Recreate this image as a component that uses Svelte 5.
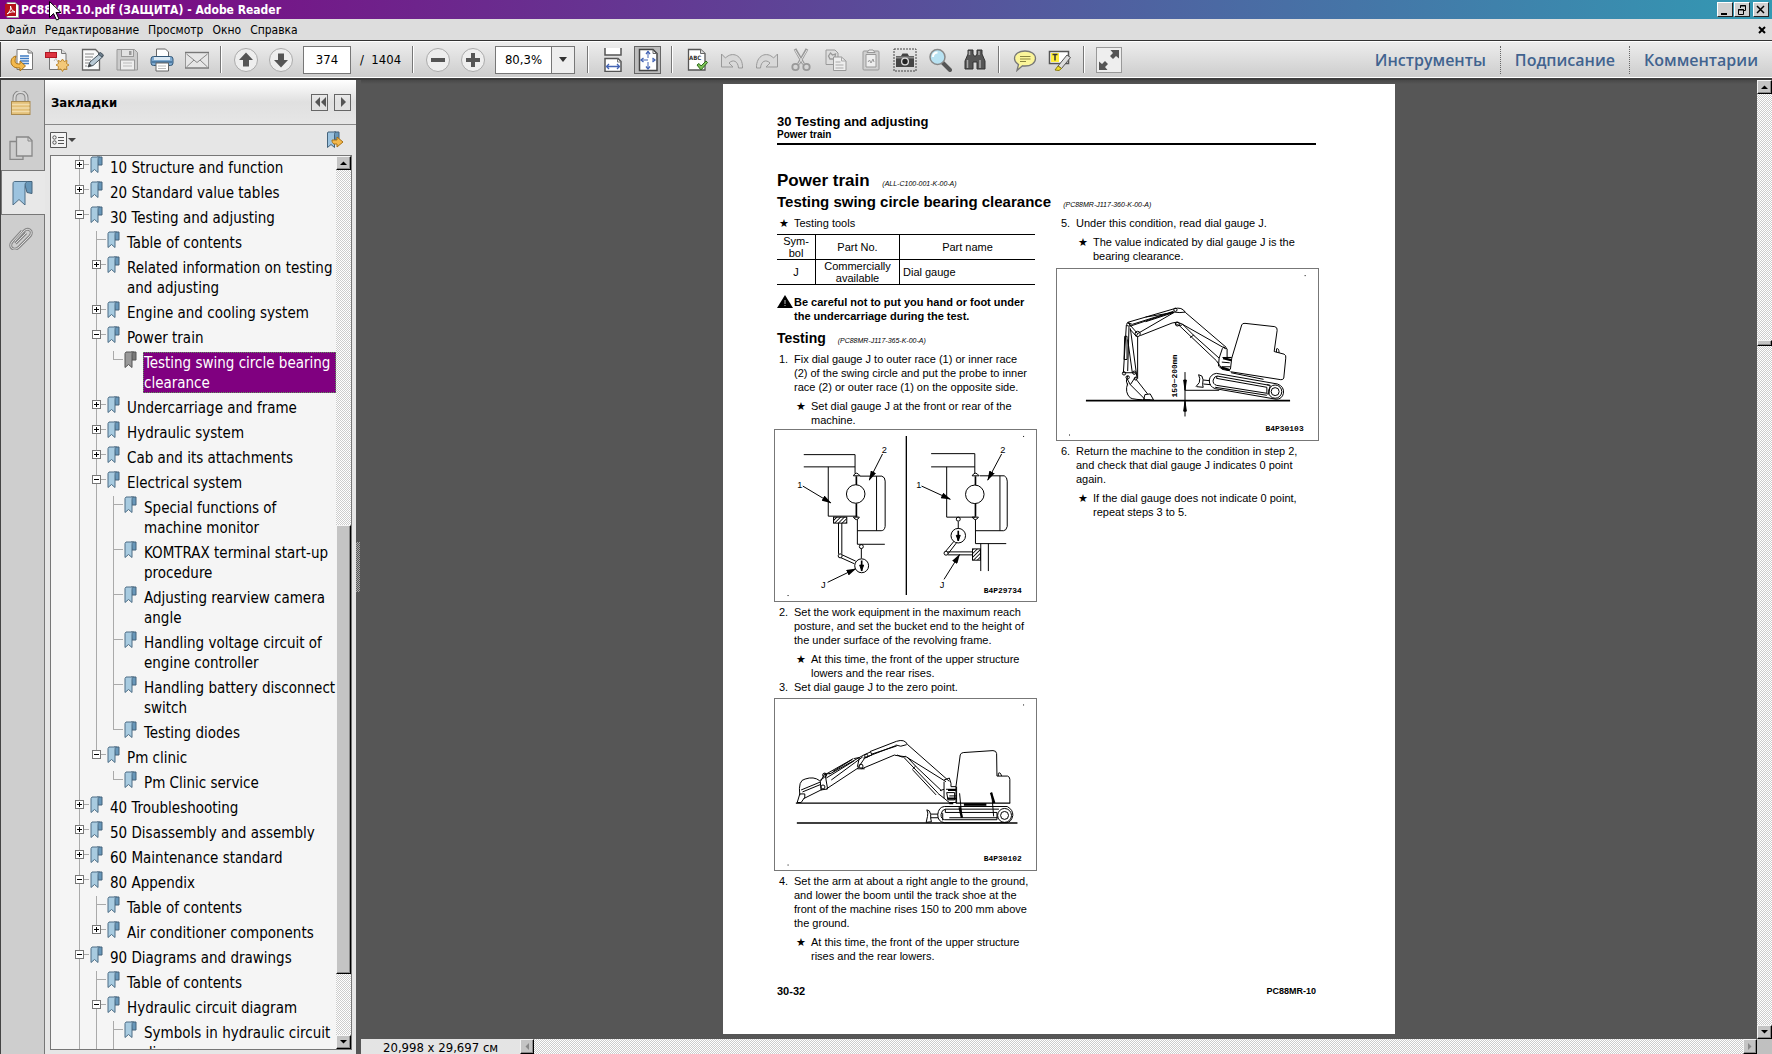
<script>
    const menus = ["Файл", "Редактирование", "Просмотр", "Окно", "Справка"]
    const panes = ["Инструменты", "Подписание", "Комментарии"]

    const fileTools = [
        { icon: "open", label: "Открыть" },
        { icon: "create", label: "Создать PDF" },
        { icon: "sign", label: "Заполнить и подписать" },
        { icon: "save", label: "Сохранить" },
        { icon: "print", label: "Печать" },
        { icon: "mail", label: "Отправить" },
    ]

    const editTools = [
        { icon: "spell", label: "Орфография" },
        { icon: "undo", label: "Отменить" },
        { icon: "redo", label: "Повторить" },
        { icon: "cut", label: "Вырезать" },
        { icon: "copy", label: "Копировать" },
        { icon: "paste", label: "Вставить" },
        { icon: "camera", label: "Снимок" },
        { icon: "zoom", label: "Масштаб" },
        { icon: "find", label: "Найти" },
    ]

    const sideTabs = [
        { icon: "lock", label: "Защита" },
        { icon: "pages", label: "Миниатюры страниц" },
        { icon: "bookmark", label: "Закладки" },
        { icon: "clip", label: "Вложения" },
    ]

    // sign: "+" collapsed, "-" expanded, nothing for a leaf
    const bookmarks = [
        { level: 0, sign: "+", text: "10 Structure and function" },
        { level: 0, sign: "+", text: "20 Standard value tables" },
        { level: 0, sign: "-", text: "30 Testing and adjusting" },
        { level: 1, text: "Table of contents" },
        { level: 1, sign: "+", text: "Related information on testing\nand adjusting" },
        { level: 1, sign: "+", text: "Engine and cooling system" },
        { level: 1, sign: "-", text: "Power train" },
        { level: 2, text: "Testing swing circle bearing\nclearance" },
        { level: 1, sign: "+", text: "Undercarriage and frame" },
        { level: 1, sign: "+", text: "Hydraulic system" },
        { level: 1, sign: "+", text: "Cab and its attachments" },
        { level: 1, sign: "-", text: "Electrical system" },
        { level: 2, text: "Special functions of\nmachine monitor" },
        { level: 2, text: "KOMTRAX terminal start-up\nprocedure" },
        { level: 2, text: "Adjusting rearview camera\nangle" },
        { level: 2, text: "Handling voltage circuit of\nengine controller" },
        { level: 2, text: "Handling battery disconnect\nswitch" },
        { level: 2, text: "Testing diodes" },
        { level: 1, sign: "-", text: "Pm clinic" },
        { level: 2, text: "Pm Clinic service" },
        { level: 0, sign: "+", text: "40 Troubleshooting" },
        { level: 0, sign: "+", text: "50 Disassembly and assembly" },
        { level: 0, sign: "+", text: "60 Maintenance standard" },
        { level: 0, sign: "-", text: "80 Appendix" },
        { level: 1, text: "Table of contents" },
        { level: 1, sign: "+", text: "Air conditioner components" },
        { level: 0, sign: "-", text: "90 Diagrams and drawings" },
        { level: 1, text: "Table of contents" },
        { level: 1, sign: "-", text: "Hydraulic circuit diagram" },
        { level: 2, text: "Symbols in hydraulic circuit\ndiagram" },
    ]

    const pageCount = 1404

    let selected = $state(7)
    let page = $state("374")
    let zoom = $state("80,3%")

    let scrolled = $derived((Number(page) / pageCount) * 99)

    // does the guide line of this level go on below the row?
    function continues(index, level) {
        for (let i = index + 1; i < bookmarks.length; i++) {
            if (bookmarks[i].level < level) return false
            if (bookmarks[i].level === level) return true
        }
        return true
    }

    function levelsUpTo(level) {
        return Array.from({ length: level + 1 }, (_, i) => i)
    }
</script>

{#snippet icon(name)}
    <svg class="icon" viewBox="0 0 24 24" width="24" height="24" aria-hidden="true">
        {#if name === "open"}
            <path d="M7 1.5h11l4.5 3v17H7z" fill="#fff" stroke="#777" />
            <path d="M18 1.5v3.5h4.5" fill="#ddd" stroke="#777" />
            <path d="M10 8h9M10 10.5h9M10 13h9M12 15.5h7" stroke="#3f7cc4" stroke-width="1.4" />
            <path d="M6 8C1 9 0 14 2 17c1.5 2.5 4 3 8 3v3l5.5-5-5.5-5v3c-3 0-5-.5-5-3 0-2 .5-3 1-5z" fill="#f3b94d" stroke="#a97216" />
        {:else if name === "create"}
            <path d="M4.5 1.5h12l4.5 4v16h-16.5z" fill="#f4f4f4" stroke="#777" />
            <path d="M16.5 1.5v4h4.5" fill="#ddd" stroke="#777" />
            <rect x="0.5" y="4.5" width="11" height="5" fill="#dd3340" stroke="#b01824" />
            <path d="M9 13c3-4 1-3 4 1" stroke="#bbb" />
            <path d="M17.5 11l1.5 2.5 3-1-.5 3 2.5 1.5-2.5 1.5.5 3-3-.5-1.5 2.5-1.5-2.5-3 .5.5-3-2.5-1.5 2.5-1.5-.5-3 3 1z" fill="#f3c878" stroke="#c08a30" />
        {:else if name === "sign"}
            <path d="M2.5 1.5h13l4 4v16.5h-17z" fill="#fafafa" stroke="#666" stroke-width="1.3" />
            <path d="M5 6h9M5 9h8M5 12h6M5 15h4M5 18h2" stroke="#888" />
            <path d="M8 19l2-5 10-8.5 3 3-10 9z" fill="#b9cad6" stroke="#45525c" />
            <path d="M18 6l2.5-1.5 3 2.5-1.5 2z" fill="#6d7f8d" stroke="#45525c" />
            <path d="M8 19l4-1.5-2.5-2z" fill="#444" />
        {:else if name === "save"}
            <path d="M2 1.5h17.5l3 3v17.5H2z" fill="#ccc" stroke="#999" />
            <rect x="6.5" y="1.5" width="12" height="7" fill="#e2e2e2" stroke="#999" />
            <rect x="14" y="3" width="2.5" height="4" fill="#999" />
            <rect x="5.5" y="12" width="14" height="10" fill="#eee" stroke="#999" />
            <path d="M8 15h9M8 18h9" stroke="#bbb" />
        {:else if name === "print"}
            <path d="M6.5 10V1h9l3 3v6z" fill="#fff" stroke="#666" />
            <rect x="1" y="8.5" width="22" height="9" rx="2.5" fill="#7faad0" stroke="#345878" />
            <rect x="4" y="9" width="16" height="3" fill="#dbe8f2" />
            <rect x="1.5" y="13" width="21" height="2" fill="#4e7ca5" />
            <path d="M6 15h12.5v8H6z" fill="#fff" stroke="#666" />
            <path d="M8 18h8M8 20.5h8" stroke="#bbb" />
        {:else if name === "mail"}
            <rect x="0" y="4.5" width="24" height="15.5" fill="#e6e6e6" stroke="#777" stroke-width="1.4" />
            <path d="M1.5 6l10.5 8.5L22.5 6M1.5 19l7.5-7M22.5 19l-7.5-7" stroke="#888" />
        {:else if name === "up"}
            <circle cx="12" cy="12" r="11.5" fill="#eee" stroke="#aaa" />
            <path d="M12 4.5l7 7.5h-4v6.5H9V12H5z" fill="#555" />
        {:else if name === "down"}
            <circle cx="12" cy="12" r="11.5" fill="#eee" stroke="#aaa" />
            <path d="M12 19.5L5 12h4V5.5h6V12h4z" fill="#555" />
        {:else if name === "minus"}
            <circle cx="12" cy="12" r="11.5" fill="#eee" stroke="#aaa" />
            <rect x="5" y="10" width="14" height="4" fill="#555" />
        {:else if name === "plus"}
            <circle cx="12" cy="12" r="11.5" fill="#eee" stroke="#aaa" />
            <path d="M10 5h4v5h5v4h-5v5h-4v-5H5v-4h5z" fill="#555" />
        {:else if name === "fitwidth"}
            <path d="M4 0v7h16V0" fill="#fff" stroke="#555" stroke-width="1.5" />
            <path d="M4 23.5V10.5h13l3 3v10z" fill="#fff" stroke="#555" stroke-width="1.5" />
            <path d="M16.5 10.5v3.5H20" stroke="#777" />
            <path d="M5.5 18.5h13M8 16l-2.5 2.5L8 21M16 16l2.5 2.5L16 21" stroke="#4464b4" stroke-width="1.3" />
        {:else if name === "fitpage"}
            <path d="M3.5 1.5h13.5l4 4v17H3.5z" fill="#fff" stroke="#444" stroke-width="1.5" />
            <path d="M17 1.5v4h4" stroke="#666" />
            <path d="M12 3v18M5 12h14" stroke="#4464b4" stroke-dasharray="7 4" />
            <path d="M10 6l2-2.5L14 6M10 18.5l2 2.5 2-2.5M7.5 10L5 12l2.5 2M16.5 10l2.5 2-2.5 2" stroke="#4464b4" stroke-width="1.3" />
        {:else if name === "spell"}
            <path d="M3.5 1.5h12l4.5 4v16.5H3.5z" fill="#fff" stroke="#555" stroke-width="1.3" />
            <path d="M15.5 1.5v4H20" fill="#ddd" stroke="#666" />
            <text x="4" y="12" font-size="6" font-weight="bold" fill="#333">ABC</text>
            <path d="M12 17l2-1.5 2 2.5 5-5 1.5 1.5-6.5 7.5z" fill="#7ec258" stroke="#2e6b1b" />
        {:else if name === "undo"}
            <path d="M1.5 6v13h11.5l-4-4c4-4 9-2 9.5 5h4C23 7 12 3 5.5 10z" fill="#d8d8d8" stroke="#999" />
        {:else if name === "redo"}
            <path d="M22.5 6v13H11l4-4c-4-4-9-2-9.5 5h-4C1 7 12 3 18.5 10z" fill="#d8d8d8" stroke="#999" />
        {:else if name === "cut"}
            <path d="M6 1l8.5 15M18 1L9.5 16" stroke="#999" stroke-width="3" />
            <path d="M6 2l8.5 14M18 2L9.5 16" stroke="#e2e2e2" />
            <circle cx="6.5" cy="19" r="3.2" stroke="#999" stroke-width="1.8" />
            <circle cx="17.5" cy="19" r="3.2" stroke="#999" stroke-width="1.8" />
        {:else if name === "copy"}
            <path d="M2 2h9l3 3v11.5H2z" fill="#ddd" stroke="#999" />
            <path d="M4.5 8l2-3 2 2 3-1-1 5H6z" stroke="#999" stroke-width="1.3" />
            <path d="M9.5 9h8l4.5 4v9.5H9.5z" fill="#eee" stroke="#999" />
            <path d="M11.5 14h5M11.5 17h8M11.5 20h8M17.5 9v4H22" stroke="#aaa" />
        {:else if name === "paste"}
            <rect x="4" y="3" width="16" height="19" rx="1" fill="#d0d0d0" stroke="#999" />
            <path d="M8 4.5l2-2.5h4l2 2.5z" fill="#eee" stroke="#999" />
            <path d="M7 6.5h10v12.5H7z" fill="#eee" stroke="#999" />
            <path d="M9 14l1.5-2 1.5 3 2-4 1 3" stroke="#999" />
        {:else if name === "camera"}
            <rect x="1" y="1" width="22" height="22" stroke="#444" stroke-dasharray="2 1" />
            <path d="M3 8h5l1.5-2.5h5L16 8h5v11H3z" fill="#444" />
            <path d="M3 8.5h18v2H3z" fill="#888" />
            <circle cx="12" cy="13.5" r="4" fill="#ddd" />
            <circle cx="12" cy="13.5" r="2.7" fill="#222" />
        {:else if name === "zoom"}
            <path d="M14 14l8 8" stroke="#555" stroke-width="4" stroke-linecap="round" />
            <circle cx="9.5" cy="9" r="7.5" fill="#b8e2f2" stroke="#888" stroke-width="1.5" />
            <path d="M5 9c0-3 2-4.5 4.5-4.5" stroke="#fff" stroke-width="2" />
        {:else if name === "find"}
            <path d="M5 2h5v4l1 2h2l1-2V2h5v4l3 7v8h-8v-7h-4v7H2v-8l3-7z" fill="#555" stroke="#333" />
            <path d="M4.5 12v8M17 12v8M6.5 3v4M16 3v4" stroke="#aaa" stroke-width="1.5" />
        {:else if name === "comment"}
            <path d="M12 3c6 0 10.5 3 10.5 7.5S18 18 12 18c-1 0-2 0-2.5-.2L4 22.5l1.5-6C3 15 1.5 13 1.5 10.5 1.5 6 6 3 12 3z" fill="#fbf59a" stroke="#777" stroke-width="1.3" />
            <path d="M7 8.5h10.5M7 11h10.5M7 13.5h6" stroke="#8a8540" />
        {:else if name === "highlight"}
            <rect x="1.5" y="3.5" width="19" height="12" fill="#fff" stroke="#555" stroke-width="1.5" />
            <rect x="3" y="5" width="8" height="9" fill="#ffee3c" />
            <path d="M4.5 6.5h5M7 6.5v6" stroke="#333" stroke-width="1.5" />
            <path d="M10 18L19 7l3.5 2.5-9 11z" fill="#ddd" stroke="#555" />
            <path d="M7 22l3-4 3.5 2.5-2.5 2z" fill="#eedc30" stroke="#8a7b10" />
        {:else if name === "expand"}
            <path d="M22 2v8.5l-3-2.5-3 3-3-3 3-3-2.5-3z" fill="#555" />
            <path d="M2 22v-8.5l3 2.5 3-3 3 3-3 3 2.5 3z" fill="#555" />
        {:else if name === "lock"}
            <path d="M5.5 11V7c0-8 12-8 12 0v4" stroke="#888" stroke-width="4" />
            <path d="M5.5 11V7c0-8 12-8 12 0v4" stroke="#d8d8d8" stroke-width="2" />
            <rect x="2.5" y="10.5" width="18.5" height="13" fill="#e3c078" stroke="#a98a50" />
            <path d="M3 13.5h17.5M3 17h17.5M3 20.5h17.5" stroke="#f2dcaa" stroke-width="1.5" />
        {:else if name === "pages"}
            <path d="M1 5.5h13v18H1z" fill="#ccc" stroke="#888" stroke-width="1.3" />
            <path d="M7.5 1h12l3.5 3.5V20H7.5z" fill="#d8d8d8" stroke="#888" stroke-width="1.3" />
            <path d="M19 1v4h4" stroke="#888" />
        {:else if name === "bookmark"}
            <path d="M14 .5h8v12l-5-1z" fill="#6897b9" stroke="#44637b" />
            <path d="M4.5.5h13c-2 1-2.5 2-2.5 4V24l-6-5.5-6 5.5V3c0-1.5.5-2.5 1.5-2.5z" fill="#9cc3df" stroke="#4d6d85" />
        {:else if name === "clip"}
            <path d="M6 15L15 5c4-4 10 0 6 5L10 21c-5 5-11 0-7-5L13 5M6.5 17.5L17 7" stroke="#888" stroke-width="3" />
            <path d="M6 15L15 5c4-4 10 0 6 5L10 21c-5 5-11 0-7-5L13 5M6.5 17.5L17 7" stroke="#ddd" />
        {/if}
    </svg>
{/snippet}

{#snippet flag()}
    <svg class="flag" viewBox="0 0 14 18" width="14" height="18" aria-hidden="true">
        <path class="fold" d="M8 1h5v8H9z" />
        <path class="ribbon" d="M3 1h7.5C9.5 1.5 9 2 9 3.5V16.5l-3.5-3-3.5 3V2.5z" />
    </svg>
{/snippet}

{#snippet arrow(dir)}
    <svg viewBox="0 0 8 8" width="8" height="8" aria-hidden="true">
        {#if dir === "up"}<path d="M0 6h7L3.5 2.5z" />
        {:else if dir === "down"}<path d="M0 2h7L3.5 5.5z" />
        {:else if dir === "left"}<path d="M6 0v7L2.5 3.5z" fill="#888" />
        {:else}<path d="M2 0v7l3.5-3.5z" fill="#888" />{/if}
    </svg>
{/snippet}

<div class="window">
    <header class="titlebar">
        <svg viewBox="0 0 14 16" width="14" height="16" aria-hidden="true">
            <path d="M2 .5h8l3.5 3v12H2z" fill="#fff" stroke="#999" />
            <rect x="0" y="2" width="11" height="12" fill="#b5121b" />
            <path d="M2 12c3-2 4-5 3.5-8 .5 3 2 5 4.5 6-3-.5-5 0-8 2z" fill="none" stroke="#fff" />
        </svg>
        <h1>PC88MR-10.pdf (ЗАЩИТА) - Adobe Reader</h1>
        <div class="windowButtons">
            <button aria-label="Свернуть"><svg viewBox="0 0 12 12" width="12" height="12"><path d="M2 9h6v2H2z" /></svg></button>
            <button aria-label="Восстановить"><svg viewBox="0 0 12 12" width="12" height="12"><path d="M4.5 4V1.5h5v5H8M4 2h6M2.5 5.5h5v5h-5zM2 6h6" fill="none" stroke="#000" /></svg></button>
            <button class="close" aria-label="Закрыть"><svg viewBox="0 0 12 12" width="12" height="12"><path d="M2 2l7 7M9 2L2 9" stroke="#000" stroke-width="1.5" /></svg></button>
        </div>
        <svg class="cursor" viewBox="0 0 12 20" width="12" height="20" aria-hidden="true">
            <path d="M.5.5v16l4-4 3 6.5 2.5-1-3-6.5H12z" fill="#fff" stroke="#000" />
        </svg>
    </header>

    <nav class="menubar">
        {#each menus as menu}
            <button>{menu}</button>
        {/each}
        <button class="closeDoc" aria-label="Закрыть документ"><svg viewBox="0 0 8 8" width="8" height="8"><path d="M1 1l6 6M7 1L1 7" stroke="#000" stroke-width="2" /></svg></button>
    </nav>

    <div class="toolbar">
        <div class="group">
            {#each fileTools as tool}
                <button aria-label={tool.label}>{@render icon(tool.icon)}</button>
            {/each}
        </div>
        <span class="sep near"></span>
        <div class="group">
            <button aria-label="Предыдущая страница">{@render icon("up")}</button>
            <button aria-label="Следующая страница">{@render icon("down")}</button>
        </div>
        <input class="pageNumber" aria-label="Страница" bind:value={page} />
        <span class="total">/ &nbsp;{pageCount}</span>
        <span class="sep near"></span>
        <div class="group">
            <button aria-label="Уменьшить">{@render icon("minus")}</button>
            <button aria-label="Увеличить">{@render icon("plus")}</button>
        </div>
        <div class="combo">
            <input aria-label="Масштаб" bind:value={zoom} />
            <button aria-label="Выбрать масштаб"><svg viewBox="0 0 8 6" width="8" height="6"><path d="M0 0h8L4 5z" fill="#333" /></svg></button>
        </div>
        <span class="sep wide"></span>
        <div class="group">
            <button aria-label="По ширине">{@render icon("fitwidth")}</button>
            <button class="pressed" aria-label="Страница целиком">{@render icon("fitpage")}</button>
        </div>
        <span class="sep"></span>
        <div class="group edit">
            {#each editTools as tool}
                <button aria-label={tool.label}>{@render icon(tool.icon)}</button>
            {/each}
        </div>
        <span class="sep"></span>
        <div class="group">
            <button aria-label="Заметка">{@render icon("comment")}</button>
            <button aria-label="Выделение">{@render icon("highlight")}</button>
        </div>
        <span class="sep"></span>
        <button class="expand" aria-label="Режим чтения">{@render icon("expand")}</button>
        <div class="panes">
            {#each panes as pane}
                <a href="#{pane}">{pane}</a>
            {/each}
        </div>
    </div>

    <div class="body">
        <nav class="tabs">
            {#each sideTabs as tab}
                <button class:active={tab.icon === "bookmark"} aria-label={tab.label}>{@render icon(tab.icon)}</button>
            {/each}
        </nav>

        <aside class="panel">
            <div class="panelHead">
                <h2>Закладки</h2>
                <button aria-label="Свернуть панель"><svg viewBox="0 0 12 10" width="12" height="10"><path d="M6 0v10L1 5zM12 0v10L7 5z" fill="#555" /></svg></button>
                <button aria-label="Развернуть панель"><svg viewBox="0 0 12 10" width="12" height="10"><path d="M4 0v10l5-5z" fill="#555" /></svg></button>
            </div>
            <div class="panelTools">
                <button aria-label="Параметры">
                    <svg viewBox="0 0 26 16" width="26" height="16">
                        <path d="M.5.5h16v15H.5z" fill="#f4f4f4" stroke="#555" />
                        <path d="M8 5.5h6M8 8.5h6M8 11.5h6" stroke="#555" />
                        <circle cx="4.5" cy="5.5" r="1.7" fill="none" stroke="#555" />
                        <circle cx="4.5" cy="10.5" r="1.7" fill="none" stroke="#555" />
                        <path d="M18 6h8l-4 4z" fill="#444" />
                    </svg>
                </button>
                <button aria-label="Найти текущую закладку">
                    <svg viewBox="0 0 18 18" width="18" height="18">
                        <path d="M8 1h5v8H9z" fill="#6897b9" stroke="#44637b" />
                        <path d="M2 1h8C9 1.5 8.5 2 8.5 3.5v13l-3.5-3-3.5 3V2z" fill="#9cc3df" stroke="#44637b" />
                        <path d="M6 9h5V6l6 5-6 5v-3H8c-1.5-1-2-2-2-4z" fill="#f3b94d" stroke="#a97216" />
                    </svg>
                </button>
            </div>
            <div class="treeBox">
                <ul class="tree">
                    {#each bookmarks as item, i}
                        <li>
                            {#each levelsUpTo(item.level) as level}
                                <span class="guide" class:own={level === item.level} class:through={continues(i, level)}>
                                    {#if level === item.level && item.sign}
                                        <button class="toggle" class:plus={item.sign === "+"} aria-label="Развернуть"></button>
                                    {/if}
                                </span>
                            {/each}
                            <a href="#bookmark-{i}" class:selected={selected === i} onclick={() => (selected = i)}>
                                {@render flag()}
                                <span>{item.text}</span>
                            </a>
                        </li>
                    {/each}
                </ul>
                <div class="scroll">
                    <button aria-label="Вверх">{@render arrow("up")}</button>
                    <div class="track"><div class="thumb" style="top: 41%; height: 52%"></div></div>
                    <button aria-label="Вниз">{@render arrow("down")}</button>
                </div>
            </div>
        </aside>

        <div class="splitter"><span></span></div>

        <div class="viewer">
            <div class="viewRow">
                <main>
                    <article class="sheet">
                        <div class="running">
                            <p class="chapter">30 Testing and adjusting</p>
                            <p>Power train</p>
                        </div>
                        <h2>Power train <i>(ALL-C100-001-K-00-A)</i></h2>
                        <h3>Testing swing circle bearing clearance <i>(PC88MR-J117-360-K-00-A)</i></h3>

                        <div class="columns">
                            <section>
                                <p class="item"><b>★</b>Testing tools</p>
                                <table>
                                    <thead>
                                        <tr><th>Sym-<br />bol</th><th>Part No.</th><th>Part name</th></tr>
                                    </thead>
                                    <tbody>
                                        <tr><td>J</td><td>Commercially<br />available</td><td class="left">Dial gauge</td></tr>
                                    </tbody>
                                </table>
                                <p class="warning">
                                    <svg viewBox="0 0 16 14" width="16" height="14" aria-hidden="true">
                                        <path d="M8 0l8 13H0z" />
                                        <path d="M8 5v4M8 10v1" stroke="#bbb" />
                                    </svg>
                                    <span>Be careful not to put you hand or foot under<br />the undercarriage during the test.</span>
                                </p>
                                <h4>Testing <i>(PC88MR-J117-365-K-00-A)</i></h4>
                                <p class="item"><b>1.</b>Fix dial gauge J to outer race (1) or inner race<br />(2) of the swing circle and put the probe to inner<br />race (2) or outer race (1) on the opposite side.</p>
                                <p class="item sub"><b>★</b>Set dial gauge J at the front or rear of the<br />machine.</p>
                                <figure>
                                    <svg viewBox="13 14 789 516" role="img" aria-label="B4P29734">
                                        <defs>
                                            <marker id="head" viewBox="0 0 30 18" refX="28" refY="9" markerWidth="30" markerHeight="18" markerUnits="userSpaceOnUse" orient="auto">
                                                <path d="M0 0L30 9L0 18z" fill="#000" stroke="none" />
                                            </marker>
                                            <pattern id="hatch" width="8" height="8" patternUnits="userSpaceOnUse" patternTransform="rotate(45)">
                                                <path d="M0 0v8" stroke-width="5" />
                                            </pattern>
                                        </defs>
                                        <path d="M100 88H255V145M100 125H255M174 125V274H262M270 153H336Q346 156 346 168V305Q344 318 334 318H262M320 153V318M262 284V359H345" />
                                        <path d="M259 153V180M259 235V276" stroke-width="5" />
                                        <path d="M250 152Q258 136 270 152ZM250 277Q260 292 268 277Z" />
                                        <circle cx="257" cy="207" r="28" fill="#fff" />
                                        <rect x="190" y="277" width="40" height="18" fill="url(#hatch)" />
                                        <path d="M205 295V388M215 295V388M214 390L257 410M211 399L253 418M274 372V402" />
                                        <circle cx="210" cy="394" r="6" fill="#fff" />
                                        <circle cx="274" cy="366" r="6" />
                                        <circle cx="275" cy="424" r="21" />
                                        <path d="M275 408V440" stroke-width="5" />
                                        <path d="M269 422h12l-6 16z" fill="#000" />
                                        <path d="M97 183L182 234" marker-end="url(#head)" />
                                        <path d="M338 86L298 165" marker-end="url(#head)" />
                                        <path d="M172 474L257 433" marker-end="url(#head)" />
                                        <path d="M410 32V512" stroke-width="4" />
                                        <path d="M485 85H617V145M485 125H617M532 125V277H618M632 152H706Q715 156 715 168V305Q712 318 704 318H620M693 152V318M619 284V357H712M635 357V440M658 357V440" />
                                        <path d="M619 153V180M619 235V276" stroke-width="5" />
                                        <path d="M609 152Q618 136 630 152ZM609 277Q619 292 628 277Z" />
                                        <circle cx="617" cy="208" r="28" fill="#fff" />
                                        <circle cx="567" cy="283" r="6" />
                                        <circle cx="567" cy="333" r="22" />
                                        <path d="M567 318V349" stroke-width="5" />
                                        <path d="M561 332h12l-6 16z" fill="#000" />
                                        <path d="M567 290V312M554 350L529 380M562 354L536 388M535 382H610M535 391H610" />
                                        <circle cx="530" cy="386" r="6" fill="#fff" />
                                        <rect x="610" y="373" width="24" height="34" fill="url(#hatch)" />
                                        <path d="M456 183L543 223" marker-end="url(#head)" />
                                        <path d="M698 86L656 165" marker-end="url(#head)" />
                                        <path d="M524 465L571 390" marker-end="url(#head)" />
                                        <path d="M763 33h3M51 514h3" />
                                        <text x="80" y="190">1</text><text x="336" y="82">2</text><text x="152" y="492">J</text>
                                        <text x="440" y="190">1</text><text x="694" y="82">2</text><text x="511" y="492">J</text>
                                        <text class="code" x="644" y="505">B4P29734</text>
                                    </svg>
                                </figure>
                                <p class="item"><b>2.</b>Set the work equipment in the maximum reach<br />posture, and set the bucket end to the height of<br />the under surface of the revolving frame.</p>
                                <p class="item sub"><b>★</b>At this time, the front of the upper structure<br />lowers and the rear rises.</p>
                                <p class="item tight"><b>3.</b>Set dial gauge J to the zero point.</p>
                                <figure>
                                    <svg viewBox="13 25 789 517" role="img" aria-label="B4P30102">
                                        <path d="M76 340H548M560 340H724M79 400H746" stroke-width="4" />
                                        <path d="M560 340V290L573 194Q575 188 582 187L672 181Q682 181 683 190L684 258H716Q723 260 723 268V340M688 258V250Q694 244 698 258" />
                                        <path d="M380 153Q405 145 413 162L540 274M388 197L410 200L530 275M378 164Q392 172 411 163M300 184L380 153M304 192L381 167M375 195L388 197M280 204L378 166M275 236L375 194M383 194Q400 205 408 198M404 203L505 309M412 200L440 230L516 302M428 238L438 228M430 240L500 315" />
                                        <path d="M164 254L250 205M168 264L252 212M178 252L282 194L302 185L306 194L284 204L262 236H284M265 233L168 297M252 205L268 202L262 230M183 270L278 200M188 244L246 208" />
                                        <path d="M164 250L172 297L152 300L150 275ZM152 283L96 306M156 298L100 326M150 276L92 300M88 312L80 338H92L103 322V312Z" />
                                        <path d="M88 316Q82 270 104 267Q130 258 148 272M162 262L148 272M168 252L180 250" />
                                        <circle cx="163" cy="255" r="6" /><circle cx="158" cy="291" r="6" /><circle cx="273" cy="228" r="6" /><circle cx="289" cy="197" r="5" />
                                        <path d="M524 270L540 264L545 280V290H560M524 275V325L540 338H562V290M505 310L524 325M530 298H560M532 308H556V330H536ZM540 318H562M512 302L524 298" />
                                        <path d="M536 300H560M534 326H562M540 340H552" stroke-width="6" />
                                        <path d="M525 350H715Q733 360 732 377Q728 398 712 399H525Q505 396 505 375Q507 352 525 350ZM528 358H690M528 368H684V390H526Q514 388 515 374Q517 360 528 358ZM520 370V392M540 384H686" />
                                        <path d="M584 344H652" stroke-width="8" />
                                        <circle cx="707" cy="377" r="21" /><circle cx="707" cy="377" r="12" />
                                        <path d="M470 398L474 380Q477 370 472 360L480 364Q485 372 484 388L486 396ZM484 373H506M484 384H506" />
                                        <path d="M571 310L578 384M668 308L674 380" />
                                        <path d="M571 352L578 384M666 308L676 340" stroke-width="7" />
                                        <path d="M763 43h3M51 527h3" />
                                        <text class="code" x="644" y="515">B4P30102</text>
                                    </svg>
                                </figure>
                                <p class="item"><b>4.</b>Set the arm at about a right angle to the ground,<br />and lower the boom until the track shoe at the<br />front of the machine rises 150 to 200 mm above<br />the ground.</p>
                                <p class="item sub"><b>★</b>At this time, the front of the upper structure<br />rises and the rear lowers.</p>
                            </section>
                            <section class="second">
                                <p class="item"><b>5.</b>Under this condition, read dial gauge J.</p>
                                <p class="item sub"><b>★</b>The value indicated by dial gauge J is the<br />bearing clearance.</p>
                                <figure>
                                    <svg viewBox="19 27 787 516" role="img" aria-label="B4P30103">
                                        <path d="M106 424H722" stroke-width="5" />
                                        <path d="M542 330L546 296L576 196Q578 190 586 191L676 201Q684 203 683 212L674 276L704 284Q711 287 709 296L703 356Q701 362 694 361L542 337M681 278V268Q688 264 689 280" />
                                        <path d="M372 147Q396 140 406 158L530 264M232 188L372 147M238 200L370 156M372 157Q390 160 406 157M234 190L246 194L370 155M286 172L372 158L286 186M262 222L372 158M270 228L366 190Q380 184 394 192L528 268M374 190Q386 202 396 196M386 196L424 232L500 304M396 192L432 228L508 296M420 234L432 226M232 188L262 222L258 230L240 210" />
                                        <circle cx="234" cy="194" r="5" /><circle cx="262" cy="223" r="8" /><circle cx="382" cy="193" r="6" /><circle cx="376" cy="150" r="5" />
                                        <path d="M228 196L219 340M236 200L232 335M240 206L260 355M262 230V358M223 230H230V300H221ZM232 240L246 340" />
                                        <path d="M219 340H256M230 358L240 376L256 352M232 350Q224 366 232 378M240 376L284 420M256 358L292 404M284 406L300 404L310 422L280 422Z" />
                                        <circle cx="221" cy="342" r="5" /><circle cx="232" cy="354" r="5" /><circle cx="252" cy="340" r="5" /><circle cx="256" cy="358" r="4" />
                                        <path d="M232 372Q222 400 240 416Q250 422 300 422" />
                                        <path d="M520 262L532 268V294H544M518 266L508 296L506 320L518 330L540 334M500 304L518 330M518 294H546M516 308L540 310M516 322H542" />
                                        <path d="M520 296L544 302M514 324L540 332" stroke-width="7" />
                                        <path d="M500 342L684 374Q705 382 702 402Q698 420 680 420L496 388Q478 382 478 362Q482 344 500 342ZM502 350L660 378M500 357L652 384V402L500 378Q488 374 490 362Q494 350 502 350ZM496 384L652 408M544 340L642 360" />
                                        <circle cx="677" cy="397" r="20" /><circle cx="677" cy="397" r="12" /><path d="M652 376L662 378L658 404H652" />
                                        <path d="M438 382L448 370Q452 358 446 346L456 350Q462 360 458 376L460 384L440 382M460 362L480 364M460 374L482 376" />
                                        <path d="M404 393H508M405 338V472" />
                                        <path d="M401 362H409L405 392ZM401 456H409L405 426Z" fill="#000" />
                                        <path d="M766 47h3M55 528h3" />
                                        <text class="code" transform="translate(382 415) rotate(-90)">150~200mm</text>
                                        <text class="code" x="648" y="516">B4P30103</text>
                                    </svg>
                                </figure>
                                <p class="item"><b>6.</b>Return the machine to the condition in step 2,<br />and check that dial gauge J indicates 0 point<br />again.</p>
                                <p class="item sub"><b>★</b>If the dial gauge does not indicate 0 point,<br />repeat steps 3 to 5.</p>
                            </section>
                        </div>

                        <footer><span>30-32</span><small>PC88MR-10</small></footer>
                    </article>
                </main>
                <div class="scroll">
                    <button aria-label="Вверх">{@render arrow("up")}</button>
                    <div class="track"><div class="thumb" style="top: {scrolled}%; height: 6px"></div></div>
                    <button aria-label="Вниз">{@render arrow("down")}</button>
                </div>
            </div>
            <div class="status">
                <span>20,998 x 29,697 см</span>
                <div class="scroll flat">
                    <button aria-label="Влево">{@render arrow("left")}</button>
                    <div class="track"></div>
                    <button aria-label="Вправо">{@render arrow("right")}</button>
                </div>
                <div class="corner"></div>
            </div>
        </div>
    </div>
</div>


<style>
    :global(body) {
        margin: 0;
        overflow: hidden;
    }

    .window {
        display: flex;
        flex-direction: column;
        height: 100vh;
        background: #565656;
        color: #000;
        font-family: Tahoma, "DejaVu Sans Condensed", sans-serif;
        font-size: 12px;
    }

    button {
        display: flex;
        align-items: center;
        justify-content: center;
        padding: 0;
        border: 0;
        background: none;
        color: inherit;
        font: inherit;
    }

    h1, h2, h3, h4, p, ul, figure {
        margin: 0;
        padding: 0;
    }

    svg {
        flex: none;
    }

    a {
        color: inherit;
        text-decoration: none;
    }

    .icon {
        fill: none;
    }

    .titlebar {
        position: relative;
        display: flex;
        align-items: center;
        gap: 2px;
        height: 19px;
        padding: 0 3px 0 5px;
        background: linear-gradient(90deg, #800080, #3399b3);
        color: #fff;
    }

    h1 {
        flex: 1;
        font-size: 12px;
    }

    .windowButtons {
        display: flex;
        gap: 1px;
    }

    .windowButtons button {
        width: 16px;
        height: 15px;
        box-sizing: border-box;
        background: #d0d0d0;
        border: 1px solid;
        border-color: #fff #222 #222 #fff;
    }

    .windowButtons .close {
        margin-left: 2px;
    }

    .cursor {
        position: absolute;
        left: 49px;
        top: 1px;
        z-index: 2;
    }

    .menubar {
        display: flex;
        align-items: center;
        gap: 9px;
        height: 21px;
        padding: 0 6px;
        background: #ddd;
    }

    .closeDoc {
        margin-left: auto;
    }

    .toolbar {
        display: flex;
        align-items: center;
        height: 37px;
        padding-left: 4px;
        border-top: 1px solid #333;
        border-bottom: 2px solid #3c3c3c;
        background: linear-gradient(#eee, #ccc);
        box-shadow: inset 0 1px #fff, inset 0 -1px #fff, inset 1px 0 #444;
    }

    .group {
        display: flex;
    }

    .group button {
        flex: 1 0 auto;
        width: 35px;
        height: 28px;
    }

    .edit {
        width: 312px;
    }

    .edit button {
        flex: 1;
    }

    .sep {
        width: 1px;
        height: 27px;
        margin: 0 7px 0 6px;
        border-left: 1px solid #777;
        background: #fff;
    }

    .sep.near {
        margin-right: 6px;
    }

    .sep.wide {
        margin: 0 6px 0 12px;
    }

    input {
        box-sizing: border-box;
        min-width: 0;
        border: 1px solid #777;
        background: #fff;
        font: inherit;
        font-size: 13px;
        text-align: center;
    }

    .pageNumber {
        width: 48px;
        height: 28px;
        margin-left: 5px;
    }

    .total {
        width: 46px;
        margin-left: 9px;
        font-size: 13px;
        white-space: nowrap;
    }

    .combo {
        display: flex;
        width: 80px;
        height: 28px;
        margin-left: 5px;
    }

    .combo input {
        width: 57px;
    }

    .combo button {
        flex: 1;
        border: 1px solid #777;
        border-left: 0;
        background: #eee;
    }

    .group .pressed {
        flex: none;
        width: 27px;
        box-sizing: border-box;
        margin: 0 4px;
        border: 1px solid #666;
        background: #bdbdbd;
    }

    .expand {
        width: 26px;
        height: 26px;
        margin-left: 4px;
        border: 1px solid #999;
        background: #eee;
    }

    .panes {
        display: flex;
        margin-left: auto;
    }

    .panes a {
        padding: 4px 14px;
        border-left: 1px dotted #666;
        color: #41638f;
        font-family: "Open Sans", sans-serif;
        font-size: 16px;
        font-weight: 600;
        line-height: 20px;
    }

    .panes a:first-child {
        border: 0;
    }

    .body {
        flex: 1;
        display: flex;
        min-height: 0;
    }

    .tabs {
        width: 45px;
        box-sizing: border-box;
        border-left: 1px solid #444;
        border-right: 1px solid #777;
        background: #cecece;
    }

    .tabs button {
        width: 100%;
        height: 45px;
        padding-right: 4px;
    }

    .tabs .active {
        width: 44px;
        box-sizing: border-box;
        border: 1px solid #777;
        border-right: 0;
        background: #e8e8e8;
    }

    .panel {
        display: flex;
        flex-direction: column;
        width: 302px;
        padding: 0 4px 4px 5px;
        background: #e6e6e6;
    }

    .panelHead {
        display: flex;
        align-items: center;
        gap: 6px;
        height: 44px;
        margin: 0 -4px 0 -5px;
        padding: 0 5px 0 6px;
        border-bottom: 1px solid #888;
        background: linear-gradient(#fff, #e0e0e0 50%, #e6e6e6);
    }

    .panelHead h2 {
        flex: 1;
        font-size: 13px;
    }

    .panelHead button {
        width: 17px;
        height: 17px;
        box-sizing: border-box;
        border: 1px solid #666;
    }

    .panelTools {
        display: flex;
        align-items: center;
        justify-content: space-between;
        height: 30px;
        padding-right: 8px;
    }

    .treeBox {
        flex: 1;
        display: flex;
        min-height: 0;
        border: 1px solid #777;
        background: #f5f5f5;
    }

    .tree {
        flex: 1;
        padding-left: 20px;
        overflow: hidden;
        list-style: none;
        font-size: 15px;
        line-height: 20px;
    }

    .tree li {
        display: flex;
        white-space: pre;
    }

    .guide {
        position: relative;
        flex: none;
        width: 17px;
    }

    .guide.own::before, .guide.through::before {
        content: "";
        position: absolute;
        left: 8px;
        top: 0;
        height: 8px;
        border-left: 1px solid #aaa;
    }

    .guide.through::before {
        height: 100%;
    }

    .guide.own::after {
        content: "";
        position: absolute;
        left: 8px;
        top: 8px;
        width: 10px;
        border-top: 1px solid #aaa;
    }

    .toggle {
        position: absolute;
        left: 4px;
        top: 4px;
        z-index: 1;
        width: 9px;
        height: 9px;
        border: 1px solid #777;
        background: linear-gradient(#000, #000) center / 5px 1px no-repeat #fff;
    }

    .toggle.plus {
        background: linear-gradient(#000, #000) center / 5px 1px no-repeat, linear-gradient(#000, #000) center / 1px 5px no-repeat, #fff;
    }

    .tree a {
        display: flex;
        flex: 1;
        gap: 6px;
        padding-bottom: 5px;
    }

    .tree a span {
        flex: 1;
        margin-bottom: -2px;
        padding: 2px 0 0 1px;
    }

    .tree .selected span {
        margin-top: 1px;
        padding-top: 1px;
        outline: 1px dotted #5c9c5c;
        outline-offset: -1px;
        background: #800080;
        color: #fff;
    }

    .flag {
        margin-left: 1px;
    }

    .ribbon {
        fill: #a8cbe0;
        stroke: #4d6d85;
    }

    .fold {
        fill: #6897b9;
        stroke: #44637b;
    }

    .selected .ribbon {
        fill: #999;
        stroke: #555;
    }

    .selected .fold {
        fill: #777;
        stroke: #555;
    }

    .scroll {
        display: flex;
        flex-direction: column;
        width: 15px;
    }

    .scroll.flat {
        flex: 1;
        flex-direction: row;
    }

    .scroll button, .thumb {
        box-sizing: border-box;
        border: 1px solid;
        border-color: #f4f4f4 #000 #000 #f4f4f4;
        background: #c4c4c4;
        box-shadow: inset -1px -1px #888;
    }

    .scroll button {
        flex: none;
        width: 15px;
        height: 14px;
    }

    .scroll.flat button {
        width: 14px;
        height: 15px;
    }

    .track {
        position: relative;
        flex: 1;
        background: repeating-conic-gradient(#fff 0 25%, #ccc 0 50%) 0 0 / 2px 2px;
    }

    .thumb {
        position: absolute;
        left: 0;
        width: 100%;
    }

    .splitter {
        display: flex;
        align-items: center;
        width: 5px;
    }

    .splitter span {
        width: 4px;
        height: 50px;
        background: repeating-conic-gradient(#aaa 0 25%, #565656 0 50%) 0 0 / 2px 2px;
    }

    .viewer {
        flex: 1;
        display: flex;
        flex-direction: column;
        min-width: 0;
    }

    .viewRow {
        flex: 1;
        display: flex;
        min-height: 0;
    }

    main {
        flex: 1;
        padding-top: 4px;
        overflow: hidden;
        background: linear-gradient(#484848, #565656 4px);
    }

    .sheet {
        display: flex;
        flex-direction: column;
        width: 539px;
        height: 920px;
        margin: 0 auto;
        padding: 30px 79px 0 54px;
        background: #fff;
        font-family: Arial, "Liberation Sans", sans-serif;
        font-size: 11px;
        line-height: 14px;
    }

    .running {
        padding-bottom: 2px;
        border-bottom: 2px solid #000;
        font-size: 10px;
        font-weight: bold;
    }

    .running p {
        line-height: 12px;
    }

    .running .chapter {
        font-size: 13px;
        line-height: 15px;
    }

    .sheet i {
        margin-left: 8px;
        font-size: 7px;
        font-weight: normal;
    }

    .sheet h2 {
        margin-top: 25px;
        font-size: 17px;
        line-height: 21px;
    }

    .sheet h3 {
        font-size: 15px;
        line-height: 16px;
    }

    .columns {
        flex: 1;
        display: flex;
        gap: 24px;
        padding-top: 3px;
    }

    section {
        width: 258px;
    }

    .item {
        position: relative;
        padding-left: 17px;
        white-space: nowrap;
    }

    .item b {
        position: absolute;
        left: 2px;
        font-weight: normal;
    }

    .item.sub {
        margin: 5px 0 2px 17px;
    }

    .second .item.sub {
        margin-bottom: 5px;
    }

    .item.tight {
        margin-top: -2px;
        margin-bottom: 4px;
    }

    table {
        width: 100%;
        margin-top: 4px;
        border-collapse: collapse;
        border-top: 1px solid #000;
        line-height: 12px;
        text-align: center;
    }

    th, td {
        height: 24px;
        padding: 0;
        border-bottom: 1px solid #000;
        border-left: 1px solid #000;
        font-weight: normal;
    }

    th:first-child, td:first-child {
        width: 38px;
        border-left: 0;
    }

    th:nth-child(2) {
        width: 83px;
    }

    .left {
        padding-left: 3px;
        text-align: left;
    }

    .warning {
        display: flex;
        gap: 1px;
        margin-top: 10px;
        font-weight: bold;
        white-space: nowrap;
    }

    h4 {
        margin: 5px 0 1px;
        font-size: 14px;
        line-height: 20px;
    }

    figure {
        width: 263px;
        height: 173px;
        margin: 0 0 3px -3px;
        box-sizing: border-box;
        border: 1px solid #777;
    }

    figure svg {
        display: block;
        width: 100%;
        height: 100%;
        fill: none;
        stroke: #000;
        stroke-width: 3;
    }

    figure text {
        fill: #000;
        stroke: none;
        font-size: 28px;
    }

    figure .code {
        font-family: "Liberation Mono", monospace;
        font-size: 24px;
        font-weight: bold;
    }

    footer {
        display: flex;
        justify-content: space-between;
        height: 50px;
        font-size: 11px;
        font-weight: bold;
    }

    small {
        font-size: 9px;
    }

    .status {
        display: flex;
        height: 15px;
        overflow: hidden;
        background: #e4e4e4;
    }

    .status > span {
        width: 137px;
        padding-left: 22px;
        font-size: 13px;
        line-height: 18px;
        white-space: nowrap;
    }

    .corner {
        width: 15px;
        background: #c0c0c0;
    }
</style>
